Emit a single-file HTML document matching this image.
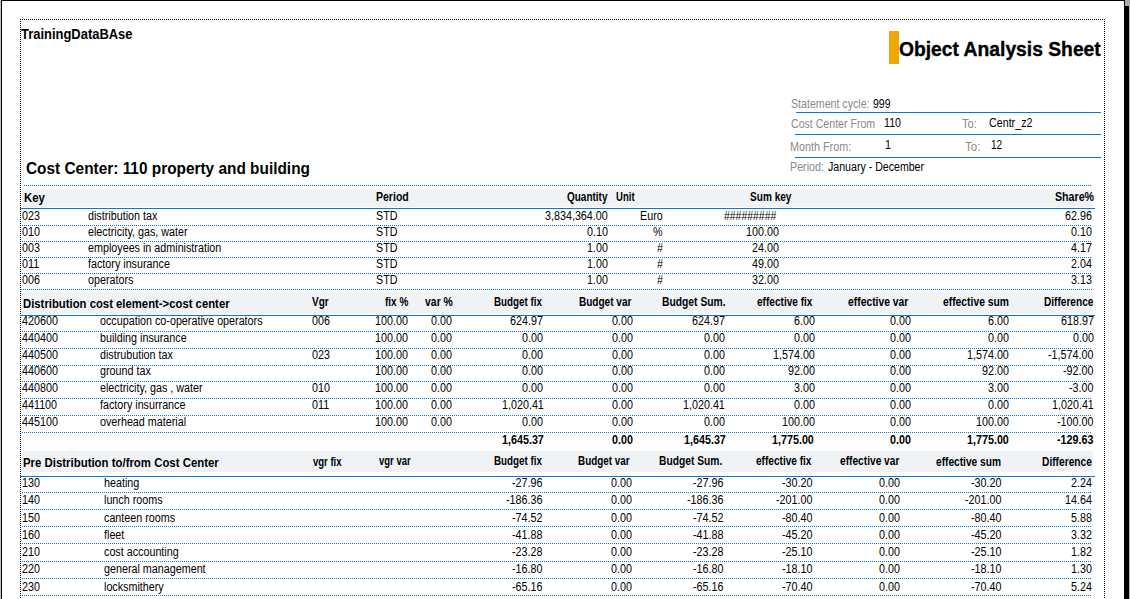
<!DOCTYPE html>
<html><head><meta charset="utf-8"><style>
html,body{margin:0;padding:0;background:#fff;width:1130px;height:599px;overflow:hidden;position:relative}
div{position:absolute}
.dh{height:1px;background-size:2px 1px;background-repeat:repeat-x}
.dv{width:1px;background-image:linear-gradient(to bottom,#000 50%,transparent 50%);background-size:1px 2px;background-repeat:repeat-y}
span{position:absolute;white-space:pre;font-family:"Liberation Sans",sans-serif;font-size:12.5px;line-height:20px;color:#000;transform-origin:0 0}
.b{font-weight:bold}
</style></head><body>
<div style="left:0px;top:0px;width:1px;height:599px;background:#c0c0c0"></div>
<div style="left:1px;top:0px;width:1px;height:599px;background:#000"></div>
<div style="left:1px;top:0px;width:1124px;height:1px;background:#000"></div>
<div style="left:1125px;top:0px;width:5px;height:6px;background:#acacac"></div>
<div style="left:1124px;top:0px;width:1px;height:6px;background:#000"></div>
<div style="left:1124px;top:6px;width:5px;height:593px;background:#000"></div>
<div style="left:1129px;top:6px;width:1px;height:593px;background:#b0b0b0"></div>
<div class="dh" style="left:20px;top:19px;width:1085px;background-image:linear-gradient(to right,#000 50%,transparent 50%)"></div>
<div class="dv" style="left:20px;top:19px;height:580px"></div>
<div class="dv" style="left:1104px;top:19px;height:580px"></div>
<div style="left:889px;top:31px;width:10px;height:33px;background:#f0a800"></div>
<div style="left:796px;top:112px;width:305px;height:1px;background:#0a78d6"></div>
<div style="left:795px;top:134px;width:306px;height:1px;background:#0a78d6"></div>
<div style="left:795px;top:157px;width:306px;height:1px;background:#0a78d6"></div>
<div class="dh" style="left:24px;top:185px;width:1068px;background-image:linear-gradient(to right,#0a78d6 50%,transparent 50%)"></div>
<div style="left:22px;top:189px;width:1070px;height:18px;background:#eff3f6"></div>
<div style="left:20px;top:208px;width:1075px;height:1px;background:#0a78d6"></div>
<div class="dh" style="left:22px;top:225px;width:1070px;background-image:linear-gradient(to right,#0a78d6 50%,transparent 50%)"></div>
<div class="dh" style="left:22px;top:241px;width:1070px;background-image:linear-gradient(to right,#0a78d6 50%,transparent 50%)"></div>
<div class="dh" style="left:22px;top:257px;width:1070px;background-image:linear-gradient(to right,#0a78d6 50%,transparent 50%)"></div>
<div class="dh" style="left:22px;top:273px;width:1070px;background-image:linear-gradient(to right,#0a78d6 50%,transparent 50%)"></div>
<div class="dh" style="left:21px;top:289px;width:1071px;background-image:linear-gradient(to right,#0a78d6 50%,transparent 50%)"></div>
<div style="left:21px;top:292px;width:1072px;height:21px;background:#eff3f6"></div>
<div style="left:20px;top:315px;width:1075px;height:1px;background:#0a78d6"></div>
<div class="dh" style="left:22px;top:331px;width:1070px;background-image:linear-gradient(to right,#0a78d6 50%,transparent 50%)"></div>
<div class="dh" style="left:22px;top:348px;width:1070px;background-image:linear-gradient(to right,#0a78d6 50%,transparent 50%)"></div>
<div class="dh" style="left:22px;top:365px;width:1070px;background-image:linear-gradient(to right,#0a78d6 50%,transparent 50%)"></div>
<div class="dh" style="left:22px;top:381px;width:1070px;background-image:linear-gradient(to right,#0a78d6 50%,transparent 50%)"></div>
<div class="dh" style="left:22px;top:398px;width:1070px;background-image:linear-gradient(to right,#0a78d6 50%,transparent 50%)"></div>
<div class="dh" style="left:22px;top:415px;width:1070px;background-image:linear-gradient(to right,#0a78d6 50%,transparent 50%)"></div>
<div class="dh" style="left:22px;top:432px;width:1070px;background-image:linear-gradient(to right,#0a78d6 50%,transparent 50%)"></div>
<div style="left:22px;top:451px;width:1071px;height:21px;background:#eff3f6"></div>
<div style="left:20px;top:476px;width:1075px;height:1px;background:#0a78d6"></div>
<div class="dh" style="left:22px;top:492px;width:1070px;background-image:linear-gradient(to right,#0a78d6 50%,transparent 50%)"></div>
<div class="dh" style="left:22px;top:509px;width:1070px;background-image:linear-gradient(to right,#0a78d6 50%,transparent 50%)"></div>
<div class="dh" style="left:22px;top:526px;width:1070px;background-image:linear-gradient(to right,#0a78d6 50%,transparent 50%)"></div>
<div class="dh" style="left:22px;top:543px;width:1070px;background-image:linear-gradient(to right,#0a78d6 50%,transparent 50%)"></div>
<div class="dh" style="left:22px;top:561px;width:1070px;background-image:linear-gradient(to right,#0a78d6 50%,transparent 50%)"></div>
<div class="dh" style="left:22px;top:578px;width:1070px;background-image:linear-gradient(to right,#0a78d6 50%,transparent 50%)"></div>
<div class="dh" style="left:22px;top:595px;width:1070px;background-image:linear-gradient(to right,#0a78d6 50%,transparent 50%)"></div>
<span class="b" style="left:21.30px;top:24px;font-size:14px;transform:scaleX(0.9247)">TrainingDataBAse</span>
<span class="b" style="left:899.20px;top:39px;font-size:20px;-webkit-text-stroke:0.35px #000;transform:scaleX(0.9638)">Object Analysis Sheet</span>
<span class="b" style="left:25.70px;top:159px;font-size:16px;transform:scaleX(0.9620)">Cost Center: 110 property and building</span>
<span style="left:790.80px;top:94px;color:#8a8a8a;transform:scaleX(0.8496)">Statement cycle:</span>
<span style="left:872.60px;top:94px;transform:scaleX(0.8372)">999</span>
<span style="left:790.90px;top:114px;color:#8a8a8a;transform:scaleX(0.8472)">Cost Center From</span>
<span style="left:884.30px;top:113px;transform:scaleX(0.8510)">110</span>
<span style="left:961.70px;top:114px;color:#8a8a8a;transform:scaleX(0.8950)">To:</span>
<span style="left:988.80px;top:113px;transform:scaleX(0.8568)">Centr_z2</span>
<span style="left:790.04px;top:137px;color:#8a8a8a;transform:scaleX(0.8634)">Month From:</span>
<span style="left:884.70px;top:135px;transform:scaleX(0.8600)">1</span>
<span style="left:964.70px;top:137px;color:#8a8a8a;transform:scaleX(0.9196)">To:</span>
<span style="left:991.00px;top:135px;transform:scaleX(0.8028)">12</span>
<span style="left:790.04px;top:157px;color:#8a8a8a;transform:scaleX(0.8575)">Period:</span>
<span style="left:827.90px;top:157px;transform:scaleX(0.8481)">January - December</span>
<span class="b" style="left:24.20px;top:188px;transform:scaleX(0.9139)">Key</span>
<span class="b" style="left:376.00px;top:187px;transform:scaleX(0.8416)">Period</span>
<span class="b" style="left:567.20px;top:187px;transform:scaleX(0.7981)">Quantity</span>
<span class="b" style="left:616.30px;top:187px;transform:scaleX(0.7639)">Unit</span>
<span class="b" style="left:750.00px;top:187px;transform:scaleX(0.8064)">Sum key</span>
<span class="b" style="left:1054.90px;top:187px;transform:scaleX(0.8526)">Share%</span>
<span style="left:21.80px;top:206px;transform:scaleX(0.8600)">023</span>
<span style="left:87.70px;top:206px;transform:scaleX(0.8600)">distribution tax</span>
<span style="left:375.70px;top:206px;transform:scaleX(0.8600)">STD</span>
<span style="left:545.49px;top:206px;transform:scaleX(0.8600)">3,834,364.00</span>
<span style="left:639.95px;top:206px;transform:scaleX(0.8600)">Euro</span>
<span style="left:723.90px;top:206px;transform:scaleX(0.8353)">#########</span>
<span style="left:1065.36px;top:206px;transform:scaleX(0.8600)">62.96</span>
<span style="left:21.80px;top:222px;transform:scaleX(0.8600)">010</span>
<span style="left:87.70px;top:222px;transform:scaleX(0.8600)">electricity, gas, water</span>
<span style="left:375.70px;top:222px;transform:scaleX(0.8600)">STD</span>
<span style="left:587.34px;top:222px;transform:scaleX(0.8600)">0.10</span>
<span style="left:653.24px;top:222px;transform:scaleX(0.8600)">%</span>
<span style="left:746.38px;top:222px;transform:scaleX(0.8600)">100.00</span>
<span style="left:1071.34px;top:222px;transform:scaleX(0.8600)">0.10</span>
<span style="left:21.80px;top:238px;transform:scaleX(0.8600)">003</span>
<span style="left:87.70px;top:238px;transform:scaleX(0.8600)">employees in administration</span>
<span style="left:375.70px;top:238px;transform:scaleX(0.8600)">STD</span>
<span style="left:587.34px;top:238px;transform:scaleX(0.8600)">1.00</span>
<span style="left:656.68px;top:238px;transform:scaleX(0.8600)">#</span>
<span style="left:752.36px;top:238px;transform:scaleX(0.8600)">24.00</span>
<span style="left:1071.34px;top:238px;transform:scaleX(0.8600)">4.17</span>
<span style="left:21.80px;top:254px;transform:scaleX(0.8600)">011</span>
<span style="left:87.70px;top:254px;transform:scaleX(0.8600)">factory insurance</span>
<span style="left:375.70px;top:254px;transform:scaleX(0.8600)">STD</span>
<span style="left:587.34px;top:254px;transform:scaleX(0.8600)">1.00</span>
<span style="left:656.68px;top:254px;transform:scaleX(0.8600)">#</span>
<span style="left:752.36px;top:254px;transform:scaleX(0.8600)">49.00</span>
<span style="left:1071.34px;top:254px;transform:scaleX(0.8600)">2.04</span>
<span style="left:21.80px;top:270px;transform:scaleX(0.8600)">006</span>
<span style="left:87.70px;top:270px;transform:scaleX(0.8600)">operators</span>
<span style="left:375.70px;top:270px;transform:scaleX(0.8600)">STD</span>
<span style="left:587.34px;top:270px;transform:scaleX(0.8600)">1.00</span>
<span style="left:656.68px;top:270px;transform:scaleX(0.8600)">#</span>
<span style="left:752.36px;top:270px;transform:scaleX(0.8600)">32.00</span>
<span style="left:1071.34px;top:270px;transform:scaleX(0.8600)">3.13</span>
<span class="b" style="left:22.70px;top:294px;transform:scaleX(0.9054)">Distribution cost element-&gt;cost center</span>
<span class="b" style="left:311.80px;top:292px;transform:scaleX(0.8010)">Vgr</span>
<span class="b" style="left:385.10px;top:292px;transform:scaleX(0.7983)">fix %</span>
<span class="b" style="left:424.60px;top:292px;transform:scaleX(0.8363)">var %</span>
<span class="b" style="left:493.60px;top:292px;transform:scaleX(0.7832)">Budget fix</span>
<span class="b" style="left:579.20px;top:292px;transform:scaleX(0.8024)">Budget var</span>
<span class="b" style="left:661.60px;top:292px;transform:scaleX(0.8250)">Budget Sum.</span>
<span class="b" style="left:756.90px;top:292px;transform:scaleX(0.8064)">effective fix</span>
<span class="b" style="left:848.40px;top:292px;transform:scaleX(0.8277)">effective var</span>
<span class="b" style="left:942.50px;top:292px;transform:scaleX(0.8260)">effective sum</span>
<span class="b" style="left:1044.40px;top:292px;transform:scaleX(0.8074)">Difference</span>
<span style="left:22.20px;top:311px;transform:scaleX(0.8600)">420600</span>
<span style="left:99.90px;top:311px;transform:scaleX(0.8600)">occupation co-operative operators</span>
<span style="left:311.80px;top:311px;transform:scaleX(0.8600)">006</span>
<span style="left:375.38px;top:311px;transform:scaleX(0.8600)">100.00</span>
<span style="left:431.44px;top:311px;transform:scaleX(0.8600)">0.00</span>
<span style="left:510.48px;top:311px;transform:scaleX(0.8600)">624.97</span>
<span style="left:612.04px;top:311px;transform:scaleX(0.8600)">0.00</span>
<span style="left:691.98px;top:311px;transform:scaleX(0.8600)">624.97</span>
<span style="left:793.64px;top:311px;transform:scaleX(0.8600)">6.00</span>
<span style="left:889.64px;top:311px;transform:scaleX(0.8600)">0.00</span>
<span style="left:988.04px;top:311px;transform:scaleX(0.8600)">6.00</span>
<span style="left:1060.58px;top:311px;transform:scaleX(0.8600)">618.97</span>
<span style="left:22.20px;top:328px;transform:scaleX(0.8600)">440400</span>
<span style="left:99.90px;top:328px;transform:scaleX(0.8600)">building insurance</span>
<span style="left:375.38px;top:328px;transform:scaleX(0.8600)">100.00</span>
<span style="left:431.44px;top:328px;transform:scaleX(0.8600)">0.00</span>
<span style="left:522.44px;top:328px;transform:scaleX(0.8600)">0.00</span>
<span style="left:612.04px;top:328px;transform:scaleX(0.8600)">0.00</span>
<span style="left:703.94px;top:328px;transform:scaleX(0.8600)">0.00</span>
<span style="left:793.64px;top:328px;transform:scaleX(0.8600)">0.00</span>
<span style="left:889.64px;top:328px;transform:scaleX(0.8600)">0.00</span>
<span style="left:988.04px;top:328px;transform:scaleX(0.8600)">0.00</span>
<span style="left:1072.54px;top:328px;transform:scaleX(0.8600)">0.00</span>
<span style="left:22.20px;top:345px;transform:scaleX(0.8600)">440500</span>
<span style="left:99.90px;top:345px;transform:scaleX(0.8600)">distrubution tax</span>
<span style="left:311.80px;top:345px;transform:scaleX(0.8600)">023</span>
<span style="left:375.38px;top:345px;transform:scaleX(0.8600)">100.00</span>
<span style="left:431.44px;top:345px;transform:scaleX(0.8600)">0.00</span>
<span style="left:522.44px;top:345px;transform:scaleX(0.8600)">0.00</span>
<span style="left:612.04px;top:345px;transform:scaleX(0.8600)">0.00</span>
<span style="left:703.94px;top:345px;transform:scaleX(0.8600)">0.00</span>
<span style="left:772.71px;top:345px;transform:scaleX(0.8600)">1,574.00</span>
<span style="left:889.64px;top:345px;transform:scaleX(0.8600)">0.00</span>
<span style="left:967.11px;top:345px;transform:scaleX(0.8600)">1,574.00</span>
<span style="left:1048.03px;top:345px;transform:scaleX(0.8600)">-1,574.00</span>
<span style="left:22.20px;top:361px;transform:scaleX(0.8600)">440600</span>
<span style="left:99.90px;top:361px;transform:scaleX(0.8600)">ground tax</span>
<span style="left:375.38px;top:361px;transform:scaleX(0.8600)">100.00</span>
<span style="left:431.44px;top:361px;transform:scaleX(0.8600)">0.00</span>
<span style="left:522.44px;top:361px;transform:scaleX(0.8600)">0.00</span>
<span style="left:612.04px;top:361px;transform:scaleX(0.8600)">0.00</span>
<span style="left:703.94px;top:361px;transform:scaleX(0.8600)">0.00</span>
<span style="left:787.66px;top:361px;transform:scaleX(0.8600)">92.00</span>
<span style="left:889.64px;top:361px;transform:scaleX(0.8600)">0.00</span>
<span style="left:982.06px;top:361px;transform:scaleX(0.8600)">92.00</span>
<span style="left:1062.98px;top:361px;transform:scaleX(0.8600)">-92.00</span>
<span style="left:22.20px;top:378px;transform:scaleX(0.8600)">440800</span>
<span style="left:99.90px;top:378px;transform:scaleX(0.8600)">electricity, gas , water</span>
<span style="left:311.80px;top:378px;transform:scaleX(0.8600)">010</span>
<span style="left:375.38px;top:378px;transform:scaleX(0.8600)">100.00</span>
<span style="left:431.44px;top:378px;transform:scaleX(0.8600)">0.00</span>
<span style="left:522.44px;top:378px;transform:scaleX(0.8600)">0.00</span>
<span style="left:612.04px;top:378px;transform:scaleX(0.8600)">0.00</span>
<span style="left:703.94px;top:378px;transform:scaleX(0.8600)">0.00</span>
<span style="left:793.64px;top:378px;transform:scaleX(0.8600)">3.00</span>
<span style="left:889.64px;top:378px;transform:scaleX(0.8600)">0.00</span>
<span style="left:988.04px;top:378px;transform:scaleX(0.8600)">3.00</span>
<span style="left:1068.96px;top:378px;transform:scaleX(0.8600)">-3.00</span>
<span style="left:22.20px;top:395px;transform:scaleX(0.8600)">441100</span>
<span style="left:99.90px;top:395px;transform:scaleX(0.8600)">factory insurrance</span>
<span style="left:311.80px;top:395px;transform:scaleX(0.8600)">011</span>
<span style="left:375.38px;top:395px;transform:scaleX(0.8600)">100.00</span>
<span style="left:431.44px;top:395px;transform:scaleX(0.8600)">0.00</span>
<span style="left:501.51px;top:395px;transform:scaleX(0.8600)">1,020.41</span>
<span style="left:612.04px;top:395px;transform:scaleX(0.8600)">0.00</span>
<span style="left:683.01px;top:395px;transform:scaleX(0.8600)">1,020.41</span>
<span style="left:793.64px;top:395px;transform:scaleX(0.8600)">0.00</span>
<span style="left:889.64px;top:395px;transform:scaleX(0.8600)">0.00</span>
<span style="left:988.04px;top:395px;transform:scaleX(0.8600)">0.00</span>
<span style="left:1051.61px;top:395px;transform:scaleX(0.8600)">1,020.41</span>
<span style="left:22.20px;top:412px;transform:scaleX(0.8600)">445100</span>
<span style="left:99.90px;top:412px;transform:scaleX(0.8600)">overhead material</span>
<span style="left:375.38px;top:412px;transform:scaleX(0.8600)">100.00</span>
<span style="left:431.44px;top:412px;transform:scaleX(0.8600)">0.00</span>
<span style="left:522.44px;top:412px;transform:scaleX(0.8600)">0.00</span>
<span style="left:612.04px;top:412px;transform:scaleX(0.8600)">0.00</span>
<span style="left:703.94px;top:412px;transform:scaleX(0.8600)">0.00</span>
<span style="left:781.68px;top:412px;transform:scaleX(0.8600)">100.00</span>
<span style="left:889.64px;top:412px;transform:scaleX(0.8600)">0.00</span>
<span style="left:976.08px;top:412px;transform:scaleX(0.8600)">100.00</span>
<span style="left:1057.00px;top:412px;transform:scaleX(0.8600)">-100.00</span>
<span class="b" style="left:502.21px;top:430px;transform:scaleX(0.8600)">1,645.37</span>
<span class="b" style="left:612.04px;top:430px;transform:scaleX(0.8600)">0.00</span>
<span class="b" style="left:683.91px;top:430px;transform:scaleX(0.8600)">1,645.37</span>
<span class="b" style="left:772.31px;top:430px;transform:scaleX(0.8600)">1,775.00</span>
<span class="b" style="left:889.64px;top:430px;transform:scaleX(0.8600)">0.00</span>
<span class="b" style="left:967.11px;top:430px;transform:scaleX(0.8600)">1,775.00</span>
<span class="b" style="left:1057.30px;top:430px;transform:scaleX(0.8600)">-129.63</span>
<span class="b" style="left:23.00px;top:453px;transform:scaleX(0.9123)">Pre Distribution to/from Cost Center</span>
<span class="b" style="left:312.90px;top:452px;transform:scaleX(0.7614)">vgr fix</span>
<span class="b" style="left:378.50px;top:451px;transform:scaleX(0.7626)">vgr var</span>
<span class="b" style="left:493.50px;top:451px;transform:scaleX(0.7865)">Budget fix</span>
<span class="b" style="left:578.40px;top:451px;transform:scaleX(0.7902)">Budget var</span>
<span class="b" style="left:658.60px;top:451px;transform:scaleX(0.8211)">Budget Sum.</span>
<span class="b" style="left:756.20px;top:451px;transform:scaleX(0.8064)">effective fix</span>
<span class="b" style="left:840.30px;top:451px;transform:scaleX(0.8140)">effective var</span>
<span class="b" style="left:935.80px;top:452px;transform:scaleX(0.8135)">effective sum</span>
<span class="b" style="left:1042.00px;top:452px;transform:scaleX(0.8172)">Difference</span>
<span style="left:22.00px;top:473px;transform:scaleX(0.8600)">130</span>
<span style="left:104.20px;top:473px;transform:scaleX(0.8600)">heating</span>
<span style="left:512.08px;top:473px;transform:scaleX(0.8600)">-27.96</span>
<span style="left:610.74px;top:473px;transform:scaleX(0.8600)">0.00</span>
<span style="left:692.58px;top:473px;transform:scaleX(0.8600)">-27.96</span>
<span style="left:781.88px;top:473px;transform:scaleX(0.8600)">-30.20</span>
<span style="left:878.84px;top:473px;transform:scaleX(0.8600)">0.00</span>
<span style="left:971.18px;top:473px;transform:scaleX(0.8600)">-30.20</span>
<span style="left:1071.14px;top:473px;transform:scaleX(0.8600)">2.24</span>
<span style="left:22.00px;top:490px;transform:scaleX(0.8600)">140</span>
<span style="left:104.20px;top:490px;transform:scaleX(0.8600)">lunch rooms</span>
<span style="left:506.10px;top:490px;transform:scaleX(0.8600)">-186.36</span>
<span style="left:610.74px;top:490px;transform:scaleX(0.8600)">0.00</span>
<span style="left:686.60px;top:490px;transform:scaleX(0.8600)">-186.36</span>
<span style="left:775.90px;top:490px;transform:scaleX(0.8600)">-201.00</span>
<span style="left:878.84px;top:490px;transform:scaleX(0.8600)">0.00</span>
<span style="left:965.20px;top:490px;transform:scaleX(0.8600)">-201.00</span>
<span style="left:1065.16px;top:490px;transform:scaleX(0.8600)">14.64</span>
<span style="left:22.00px;top:508px;transform:scaleX(0.8600)">150</span>
<span style="left:104.20px;top:508px;transform:scaleX(0.8600)">canteen rooms</span>
<span style="left:512.08px;top:508px;transform:scaleX(0.8600)">-74.52</span>
<span style="left:610.74px;top:508px;transform:scaleX(0.8600)">0.00</span>
<span style="left:692.58px;top:508px;transform:scaleX(0.8600)">-74.52</span>
<span style="left:781.88px;top:508px;transform:scaleX(0.8600)">-80.40</span>
<span style="left:878.84px;top:508px;transform:scaleX(0.8600)">0.00</span>
<span style="left:971.18px;top:508px;transform:scaleX(0.8600)">-80.40</span>
<span style="left:1071.14px;top:508px;transform:scaleX(0.8600)">5.88</span>
<span style="left:22.00px;top:525px;transform:scaleX(0.8600)">160</span>
<span style="left:104.20px;top:525px;transform:scaleX(0.8600)">fleet</span>
<span style="left:512.08px;top:525px;transform:scaleX(0.8600)">-41.88</span>
<span style="left:610.74px;top:525px;transform:scaleX(0.8600)">0.00</span>
<span style="left:692.58px;top:525px;transform:scaleX(0.8600)">-41.88</span>
<span style="left:781.88px;top:525px;transform:scaleX(0.8600)">-45.20</span>
<span style="left:878.84px;top:525px;transform:scaleX(0.8600)">0.00</span>
<span style="left:971.18px;top:525px;transform:scaleX(0.8600)">-45.20</span>
<span style="left:1071.14px;top:525px;transform:scaleX(0.8600)">3.32</span>
<span style="left:22.00px;top:542px;transform:scaleX(0.8600)">210</span>
<span style="left:104.20px;top:542px;transform:scaleX(0.8600)">cost accounting</span>
<span style="left:512.08px;top:542px;transform:scaleX(0.8600)">-23.28</span>
<span style="left:610.74px;top:542px;transform:scaleX(0.8600)">0.00</span>
<span style="left:692.58px;top:542px;transform:scaleX(0.8600)">-23.28</span>
<span style="left:781.88px;top:542px;transform:scaleX(0.8600)">-25.10</span>
<span style="left:878.84px;top:542px;transform:scaleX(0.8600)">0.00</span>
<span style="left:971.18px;top:542px;transform:scaleX(0.8600)">-25.10</span>
<span style="left:1071.14px;top:542px;transform:scaleX(0.8600)">1.82</span>
<span style="left:22.00px;top:559px;transform:scaleX(0.8600)">220</span>
<span style="left:104.20px;top:559px;transform:scaleX(0.8600)">general management</span>
<span style="left:512.08px;top:559px;transform:scaleX(0.8600)">-16.80</span>
<span style="left:610.74px;top:559px;transform:scaleX(0.8600)">0.00</span>
<span style="left:692.58px;top:559px;transform:scaleX(0.8600)">-16.80</span>
<span style="left:781.88px;top:559px;transform:scaleX(0.8600)">-18.10</span>
<span style="left:878.84px;top:559px;transform:scaleX(0.8600)">0.00</span>
<span style="left:971.18px;top:559px;transform:scaleX(0.8600)">-18.10</span>
<span style="left:1071.14px;top:559px;transform:scaleX(0.8600)">1.30</span>
<span style="left:22.00px;top:577px;transform:scaleX(0.8600)">230</span>
<span style="left:104.20px;top:577px;transform:scaleX(0.8600)">locksmithery</span>
<span style="left:512.08px;top:577px;transform:scaleX(0.8600)">-65.16</span>
<span style="left:610.74px;top:577px;transform:scaleX(0.8600)">0.00</span>
<span style="left:692.58px;top:577px;transform:scaleX(0.8600)">-65.16</span>
<span style="left:781.88px;top:577px;transform:scaleX(0.8600)">-70.40</span>
<span style="left:878.84px;top:577px;transform:scaleX(0.8600)">0.00</span>
<span style="left:971.18px;top:577px;transform:scaleX(0.8600)">-70.40</span>
<span style="left:1071.14px;top:577px;transform:scaleX(0.8600)">5.24</span>
</body></html>
